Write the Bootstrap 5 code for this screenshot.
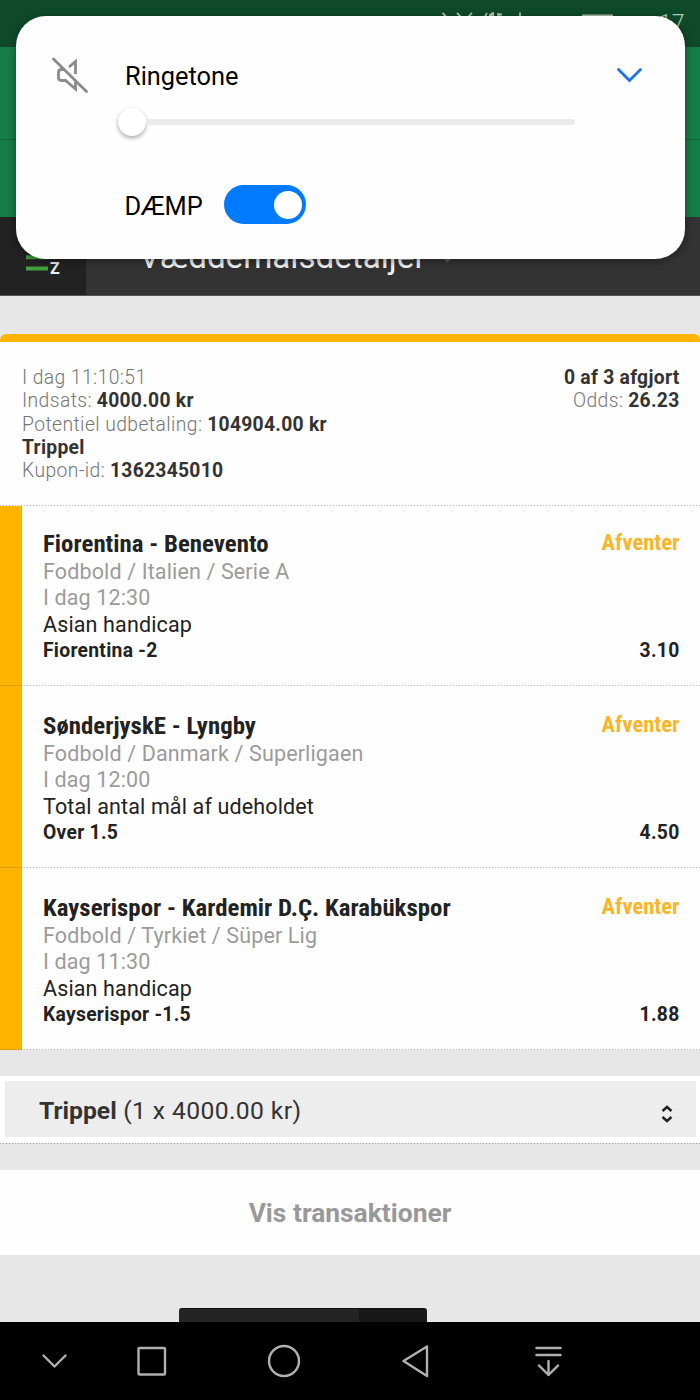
<!DOCTYPE html>
<html lang="da">
<head>
<meta charset="utf-8">
<meta name="viewport" content="width=device-width, initial-scale=1">
<title>Væddemålsdetaljer</title>
<link href="https://cdn.jsdelivr.net/npm/bootstrap@5.3.0/dist/css/bootstrap.min.css" rel="stylesheet">
<style>
body{font-family:Roboto,sans-serif;background:#e7e7e7;color:#333;width:700px;height:1400px;overflow:hidden}
.screen{height:1400px}
.status{height:47px;background:#0e4a29}
.greenbar{height:93px;background:#157d45;border-bottom:1px solid #116637}
.greenbar.second{height:77px;border-bottom:0}
.titlebar{height:79px;background:#333;color:#f2f2f2;border-bottom:1px solid #555}
.azbox{width:86px;background:#222}
.page-title{font-size:33.2px;line-height:40px;padding:20px 0 0 53px;white-space:nowrap}
.volume{left:15.5px;top:15.5px;width:669px;height:243.5px;border-radius:30px;background:#fefefe;color:#000;box-shadow:0 2px 8px rgba(0,0,0,.4);font-size:25.4px;line-height:30px}
.track{height:6px;width:429px;background:#ebebeb;border-radius:0 3px 3px 0}
.knob{width:28px;height:28px;background:#fff;border-radius:50%;box-shadow:0 2px 4px rgba(0,0,0,.35)}
.toggle{width:82px;height:39px;border-radius:20px;background:#007bff;margin-left:21.8px;padding-right:4px}
.toggle i{width:28px;height:28px;background:#fff}
.coupon{margin-top:38.4px;background:#fefefe;border-top:8px solid #ffb400;border-radius:6px 6px 0 0;height:171.6px;padding:24px 20.5px 0 22px;font-size:19.3px;line-height:23.1px}
.grey1{color:#757575;font-weight:300;letter-spacing:.43px}
.coupon b,.bet b{font-weight:700;letter-spacing:.28px}
.dots{height:1px;background:repeating-linear-gradient(90deg,rgba(0,0,0,.26) 0 1.5px,rgba(0,0,0,.05) 1.5px 3px)}
.on-edge{margin-top:-1px}
.bet{height:182px;background:#fefefe;border-left:22px solid #ffb400;color:#222;font-size:21.5px;line-height:26.1px;letter-spacing:.14px;padding:26px 20.5px 0 21px}
.bet.first{height:180px;padding-top:24px}
.bet b{font-size:19.3px}
.event,.state{font-family:"Roboto Condensed",Roboto,sans-serif;font-weight:700;font-size:24.8px;line-height:28px;white-space:nowrap;letter-spacing:.03px;margin-bottom:1.4px}
.state{color:#f8b62a;font-size:22.5px;line-height:25px}
.muted2{color:#9b9b9b}
.selectbox{margin-top:26px;background:#fff;padding:5px 4px 6px 5px;height:67px}
.selectbox>div{background:#ededed;height:56px;padding:3px 23px 0 34px;font-size:24.7px}
.amount{letter-spacing:.38px}
.trans{margin-top:26px;height:85px;padding-top:2px;background:#fefefe;color:#999;font-size:26.4px;font-weight:700}
.toastbar{height:14px;width:248px;margin:53px 0 0 178.5px;border-radius:3px 3px 0 0;background:linear-gradient(90deg,#242424 180px,#181818 180px);border-top:1px solid #111}
.android{height:79px;background:#000}
</style>
</head>
<body>
<div class="screen position-relative d-flex flex-column">
  <div class="status flex-shrink-0"><svg width="700" height="47" fill="none" stroke="#a9c0b2" stroke-width="1.8" class="d-block"><path d="M442.5 13l4 4M457 13l4 4M472 13l-4 4M487 13l-3 5M491 18v-3q0-2 3-2M489 15h5M499 13v5M497 14.5h5M520 12.5v5M582 15.3h31"/><text x="659" y="31" font-size="23" font-weight="300" fill="#b4cabd" stroke="none">17</text></svg></div>
  <div class="greenbar flex-shrink-0"></div>
  <div class="greenbar second flex-shrink-0"></div>
  <header class="titlebar d-flex flex-shrink-0">
    <div class="azbox"><svg width="86" height="78" class="d-block"><path d="M26 40.3h22M26 51.5h22" stroke="#43a03e" stroke-width="4"/><text x="50" y="56.5" fill="#eee" font-size="16" font-weight="700">Z</text></svg></div>
    <div class="page-title">Væddemålsdetaljer</div>
    <svg width="40" height="78"><path d="M14 37h15l-7.5 9z" fill="#5c5c5c"/></svg>
  </header>

  <section class="coupon d-flex justify-content-between flex-shrink-0">
    <div><div class="grey1">I dag 11:10:51</div>
      <div><span class="grey1">Indsats:</span> <b>4000.00 kr</b></div>
      <div><span class="grey1">Potentiel udbetaling:</span> <b>104904.00 kr</b></div>
      <div><b>Trippel</b></div>
      <div><span class="grey1">Kupon-id:</span> <b>1362345010</b></div></div>
    <div class="text-end"><div><b>0 af 3 afgjort</b></div><div><span class="grey1">Odds:</span> <b>26.23</b></div></div>
  </section>

  <div class="dots on-edge flex-shrink-0"></div>
  <article class="bet first flex-shrink-0">
    <div class="d-flex justify-content-between"><div class="event">Fiorentina - Benevento</div><div class="state">Afventer</div></div>
    <div class="muted2">Fodbold / Italien / Serie A</div><div class="muted2">I dag 12:30</div><div>Asian handicap</div>
    <div class="d-flex justify-content-between"><b>Fiorentina -2</b><b>3.10</b></div>
  </article>
  <div class="dots on-edge flex-shrink-0"></div>
  <article class="bet flex-shrink-0">
    <div class="d-flex justify-content-between"><div class="event">SønderjyskE - Lyngby</div><div class="state">Afventer</div></div>
    <div class="muted2">Fodbold / Danmark / Superligaen</div><div class="muted2">I dag 12:00</div><div>Total antal mål af udeholdet</div>
    <div class="d-flex justify-content-between"><b>Over 1.5</b><b>4.50</b></div>
  </article>
  <div class="dots on-edge flex-shrink-0"></div>
  <article class="bet flex-shrink-0">
    <div class="d-flex justify-content-between"><div class="event">Kayserispor - Kardemir D.Ç. Karabükspor</div><div class="state">Afventer</div></div>
    <div class="muted2">Fodbold / Tyrkiet / Süper Lig</div><div class="muted2">I dag 11:30</div><div>Asian handicap</div>
    <div class="d-flex justify-content-between"><b>Kayserispor -1.5</b><b>1.88</b></div>
  </article>
  <div class="dots on-edge flex-shrink-0"></div>

  <div class="selectbox flex-shrink-0"><div class="d-flex align-items-center justify-content-between"><span><b>Trippel</b><span class="amount"> (1 x 4000.00 kr)</span></span>
    <svg class="mt-2" width="12" height="18" viewBox="0 0 12 18" fill="none" stroke="#222" stroke-width="2.5"><path d="M1.5 6L6 2l4.5 4M1.5 12L6 16l4.5-4"/></svg></div></div>
  <div class="dots flex-shrink-0"></div>
  <div class="trans d-flex align-items-center justify-content-center flex-shrink-0">Vis transaktioner</div>
  <div class="toastbar flex-shrink-0"></div>
  <nav class="android flex-shrink-0"><svg class="d-block" width="700" height="78" fill="none" stroke="#b0b0b0" stroke-width="2.4" stroke-linecap="round" stroke-linejoin="round"><path d="M43.5 33.5L54.5 44.5L65.5 33.5"/><rect x="138.5" y="26" width="26.5" height="26.5" rx="1"/><circle cx="284" cy="39" r="15"/><path d="M427 24.5L403.5 39L427 54z M536.5 26h24M536.5 33h24M548.5 39v14M539 43.5l9.5 9.5l9.5-9.5"/></svg></nav>

  <div class="volume position-absolute">
    <div class="d-flex align-items-center" style="padding:39px 41.5px 0 34.5px;height:80px">
      <svg width="40" height="40" viewBox="0 0 40 40" fill="none" stroke="#8b8b8b" stroke-width="2.8" stroke-linejoin="round"><path d="M3.5 4l33 32.5" stroke-linecap="round"/><path d="M14 14.5h-2.5q-3 0-3 3v5q0 3 3 3H15.5L25.5 34V27M19 12l6.5-5.5V19" stroke-linejoin="miter"/></svg>
      <div style="margin:1px 0 0 35px">Ringetone</div>
      <svg class="ms-auto" width="27" height="18" fill="none" stroke="#1a76de" stroke-width="2.8" stroke-linecap="round"><path d="M2.5 3.5L13.5 14.5L24.5 3.5"/></svg>
    </div>
    <div class="d-flex align-items-center" style="margin:12.5px 0 0 102.5px"><div class="knob"></div><div class="track"></div></div>
    <div class="d-flex align-items-center" style="margin:49px 0 0 109px"><span style="padding-top:2px">DÆMP</span><div class="toggle d-flex align-items-center justify-content-end"><i class="rounded-circle"></i></div></div>
  </div>
</div>
<script src="https://cdn.jsdelivr.net/npm/bootstrap@5.3.0/dist/js/bootstrap.bundle.min.js"></script>
</body>
</html>
